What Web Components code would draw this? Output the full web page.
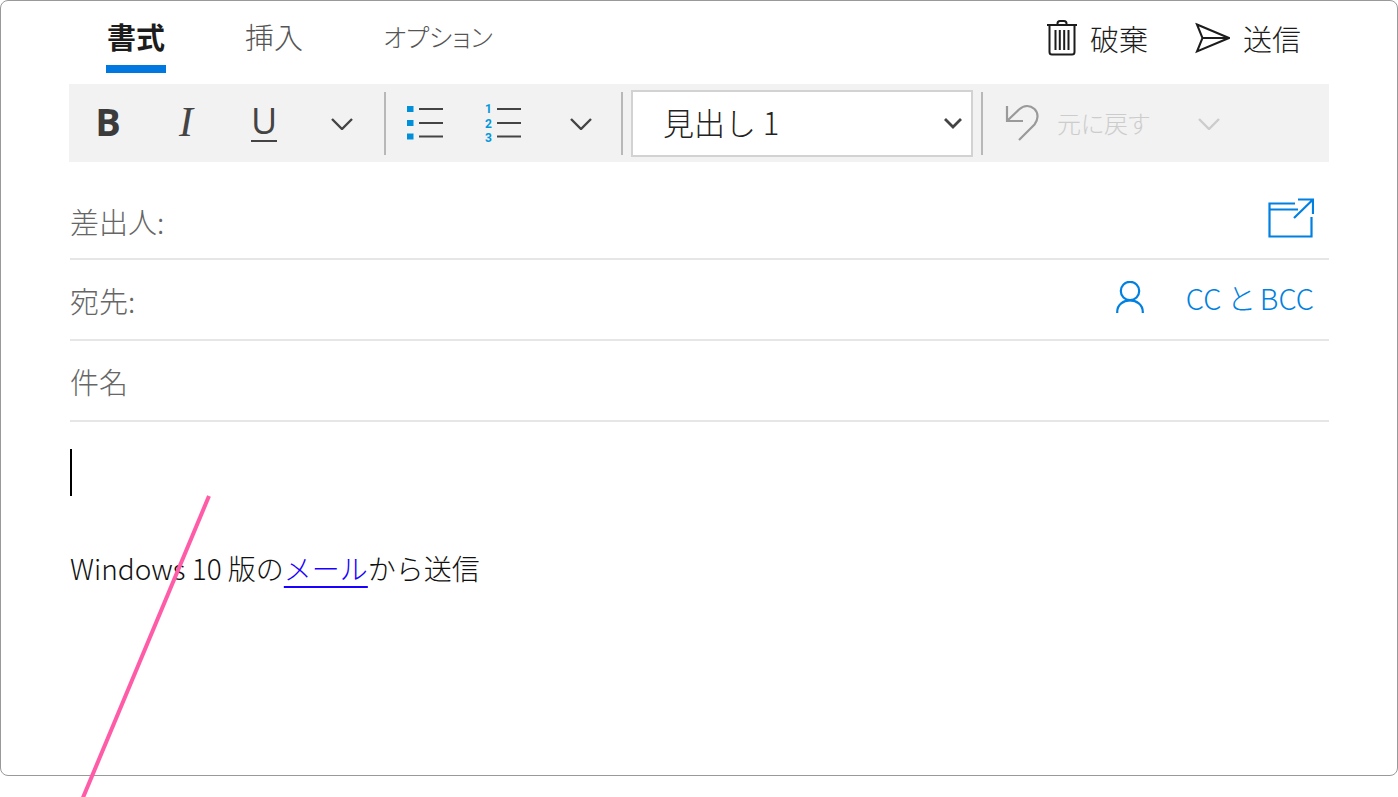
<!DOCTYPE html>
<html lang="ja">
<head>
<meta charset="utf-8">
<meta name="viewport" content="width=device-width, initial-scale=1">
<title>メール</title>
<style>
body { margin: 0; background: #fff; font-family: "Noto Sans CJK JP", sans-serif; font-weight: 300; color: #222; overflow: hidden; }
</style>
</head>
<body>
<mail-composer></mail-composer>
<script>
const define = (name, html, setup) => {
  const template = document.createElement("template");
  template.innerHTML = html;
  customElements.define(name, class extends HTMLElement {
    connectedCallback() {
      if (this.shadowRoot) return;
      this.attachShadow({ mode: "open" }).append(template.content.cloneNode(true));
      if (setup) setup(this, this.shadowRoot);
    }
  });
};

const icons = {
  trash: `<svg width="30" height="38" viewBox="0 0 30 38" fill="none" stroke="#1c1c1c" stroke-width="2"><path d="M0 6h30M2.500 6v27q0 2.500 2.500 2.500h20q2.500 0 2.500-2.500V6M10.500 6V4.500Q10.500 2 13 2h4Q19.500 2 19.500 4.500V6M8.500 11v20M12.800 11v20M17.200 11v20M21.500 11v20"/></svg>`,
  send: `<svg width="36" height="32" viewBox="0 0 36 32" fill="none" stroke="#1c1c1c" stroke-width="2"><path d="M3 2.500 35 16 3 29.500 8.500 16ZM8.500 16H34"/></svg>`,
  chevron: `<svg width="22" height="14" viewBox="0 0 22 14" fill="none" stroke="currentColor" stroke-width="2.400"><path d="m1 3 10 10L21 3"/></svg>`,
  "chevron-small": `<svg width="18" height="12" viewBox="0 0 18 12" fill="none" stroke="currentColor" stroke-width="2.800"><path d="m1 2 8 8 8-8"/></svg>`,
  bullets: `<svg width="36" height="36" viewBox="0 0 36 36"><path fill="#0090da" d="M0 1h6.500v6H0zM0 15h6.500v6H0zM0 28.500h6.500v6H0z"/><path stroke="#444" stroke-width="2.200" d="M12 4h24M12 18h24M12 31.500h24"/></svg>`,
  numbers: `<svg width="38" height="46" viewBox="0 0 38 46"><g fill="#0098dc" font-family="Roboto" font-weight="700" font-size="12"><text x="1" y="13">1</text><text x="1" y="28">2</text><text x="1" y="42">3</text></g><path stroke="#444" stroke-width="2.200" d="M13 9h24M13 23h24M13 36.500h24"/></svg>`,
  undo: `<svg width="34" height="38" viewBox="0 0 34 38" fill="none" stroke="#9a9a9a" stroke-width="2.200"><path d="M2 2v15h16M2 17 14 5.500C19 1 25 1 29.500 5 34 9.500 33 16 29.500 20.500L14 36"/></svg>`,
  popout: `<svg width="46" height="40" viewBox="0 0 46 40" fill="none" stroke="#0080e0" stroke-width="2.200"><path d="M27 5.500H1.500v33h42V19M2 11.500h28M26 20 45 1.500M30 1.500h15V16"/></svg>`,
  person: `<svg width="28" height="32" viewBox="0 0 28 32" fill="none" stroke="#0080e0" stroke-width="2.200"><circle cx="14" cy="10" r="9.200"/><path d="M1.200 32v-1c0-15.500 25.600-15.500 25.600 0v1"/></svg>`
};

define("mail-icon", `<style>:host{display:block;flex:none}svg{display:block}</style>`, (host, root) => {
  root.append(document.createRange().createContextualFragment(icons[host.getAttribute("name")]));
});

define("mail-tab", `<style>
:host { display: block; }
button { display: block; height: 72px; padding: 6px 1px 0; border: 0; border-bottom: 8px solid transparent; background: none; font: inherit; font-size: 29px; line-height: 44px; font-feature-settings: "palt"; color: #555; white-space: nowrap; }
:host([compact]) button { font-size: 25px; }
:host([selected]) button { border-color: #0078e0; font-weight: 700; color: #1c1c1c; }
</style><button type="button" role="tab"><slot></slot></button>`, (host, root) => {
  root.querySelector("button").setAttribute("aria-selected", host.hasAttribute("selected"));
});

define("mail-action", `<style>
:host { display: block; }
button { display: flex; align-items: center; gap: 13px; height: 73px; padding: 0; border: 0; background: none; font: inherit; font-size: 29px; line-height: 44px; color: #1c1c1c; }
</style><button type="button"><slot name="icon"></slot><slot></slot></button>`);

define("tool-button", `<style>
:host { display: block; flex: none; width: 78px; color: #444; }
button { display: flex; align-items: center; justify-content: center; width: 100%; height: 78px; padding: 0; border: 0; background: none; font: 400 40px/48px "Open Sans", sans-serif; color: inherit; }
:host([kind=bold]) button { font: 700 38px/48px "Open Sans", sans-serif; color: #3b3b3b; padding-bottom: 4px; }
:host([kind=italic]) button { font: italic 400 42px/48px "Liberation Serif", serif; padding-bottom: 2px; }
:host([kind=underline]) button { font: 400 36px/48px "Open Sans", sans-serif; padding-bottom: 2px; }
:host([kind=underline]) span { height: 38px; line-height: 38px; border-bottom: 2px solid; }
:host([disabled]) { color: #ccc; }
</style><button type="button"><span><slot></slot></span></button>`, (host, root) => {
  const button = root.querySelector("button");
  button.setAttribute("aria-label", host.getAttribute("label"));
  button.disabled = host.hasAttribute("disabled");
});

define("tool-divider", `<style>:host{display:block;flex:none;width:2px;height:63px;background:#b8b8b8}</style>`);

define("style-picker", `<style>
:host { display: grid; align-items: center; flex: none; width: 342px; margin: 0 8px; }
select, mail-icon { grid-area: 1 / 1; }
select { appearance: none; width: 100%; height: 67px; padding: 0 48px 4px 30px; border: 2px solid #d2d2d2; border-radius: 0; background: #fff; font: inherit; font-size: 31px; color: #222; }
mail-icon { justify-self: end; margin-right: 11px; color: #444; pointer-events: none; }
</style><select aria-label="スタイル"><option>見出し 1</option></select><mail-icon name="chevron-small"></mail-icon>`);

define("format-bar", `<style>
:host { display: flex; align-items: center; height: 78px; background: #f2f2f2; overflow: hidden; }
.group { display: flex; margin-right: 3px; }
.lists { margin-right: 1px; }
.undo { display: flex; align-items: center; gap: 18px; margin: 0 20px 0 22px; padding: 0; border: 0; background: none; font: inherit; font-size: 24px; line-height: 36px; font-feature-settings: "palt"; color: #ccc; white-space: nowrap; }
</style>
<div class="group">
<tool-button kind="bold" label="太字">B</tool-button>
<tool-button kind="italic" label="斜体">I</tool-button>
<tool-button kind="underline" label="下線">U</tool-button>
<tool-button label="その他の文字書式"><mail-icon name="chevron"></mail-icon></tool-button>
</div>
<tool-divider></tool-divider>
<div class="group lists">
<tool-button label="箇条書き"><mail-icon name="bullets"></mail-icon></tool-button>
<tool-button label="段落番号"><mail-icon name="numbers"></mail-icon></tool-button>
<tool-button label="その他の段落書式"><mail-icon name="chevron"></mail-icon></tool-button>
</div>
<tool-divider></tool-divider>
<style-picker></style-picker>
<tool-divider></tool-divider>
<button class="undo" type="button" disabled><mail-icon name="undo"></mail-icon>元に戻す</button>
<tool-button label="その他の操作" disabled><mail-icon name="chevron"></mail-icon></tool-button>`);

define("mail-field", `<style>
:host { display: flex; align-items: center; height: 79px; margin-left: 1px; border-bottom: 2px solid #e6e6e6; }
label { flex: none; font-size: 29px; line-height: 44px; color: #666; }
input { flex: 1; min-width: 0; height: 44px; padding: 0 8px; border: 0; outline: 0; background: none; font: inherit; font-size: 29px; }
.end { display: flex; align-items: center; gap: 42px; margin-right: 15px; padding-bottom: 6px; }
</style><label for="field"></label><input id="field" type="text"><div class="end"><slot></slot></div>`, (host, root) => {
  root.querySelector("label").textContent = host.getAttribute("label");
});

define("mail-body", `<style>
:host { display: block; margin-left: 1px; padding-top: 27px; }
.editor { outline: 0; font-size: 28px; line-height: 42px; color: #111; }
.caret { width: 2px; height: 47px; background: #000; }
p { margin: 51px 0 0; }
a { color: #1a00ff; text-decoration: underline 2px; text-underline-offset: 6px; text-decoration-skip-ink: none; }
</style>
<div class="editor" role="textbox" aria-label="本文" aria-multiline="true" contenteditable="true" spellcheck="false">
<div class="caret"></div>
<p>Windows 10 版の<a href="#mail">メール</a>から送信</p>
</div>`);

define("callout-line", `<style>
:host { position: absolute; left: 80px; top: 495px; pointer-events: none; }
svg { display: block; }
</style><svg width="134" height="302" viewBox="0 0 134 302"><path d="M129 1 2 305" stroke="#ff5ca8" stroke-width="4"/></svg>`);

define("mail-composer", `<style>
:host { display: block; }
.card { box-sizing: border-box; min-height: calc(100vh - 21px); padding: 0 68px; border: 1px solid #999; border-radius: 8px; background: #fff; }
header { display: flex; justify-content: space-between; height: 83px; padding: 0 28px 0 37px; }
.tabs { display: flex; gap: 78px; }
.actions { display: flex; gap: 46px; }
.first { height: 74px; margin-top: 22px; }
.link { padding: 0; border: 0; background: none; font: inherit; font-size: 29px; line-height: 40px; font-feature-settings: "palt"; color: #0080e0; white-space: nowrap; }
.icon { display: block; padding: 0; border: 0; background: none; }
</style>
<main class="card">
<header>
<div class="tabs" role="tablist">
<mail-tab selected>書式</mail-tab><mail-tab>挿入</mail-tab><mail-tab compact>オプション</mail-tab>
</div>
<div class="actions">
<mail-action><mail-icon slot="icon" name="trash"></mail-icon>破棄</mail-action>
<mail-action><mail-icon slot="icon" name="send"></mail-icon>送信</mail-action>
</div>
</header>
<format-bar></format-bar>
<mail-field class="first" label="差出人:"><button class="icon" type="button" aria-label="新しいウィンドウで開く"><mail-icon name="popout"></mail-icon></button></mail-field>
<mail-field label="宛先:"><button class="icon" type="button" aria-label="連絡先を選択"><mail-icon name="person"></mail-icon></button><button class="link" type="button">CC と BCC</button></mail-field>
<mail-field label="件名"></mail-field>
<mail-body></mail-body>
</main>
<callout-line></callout-line>`);
</script>
</body>
</html>
